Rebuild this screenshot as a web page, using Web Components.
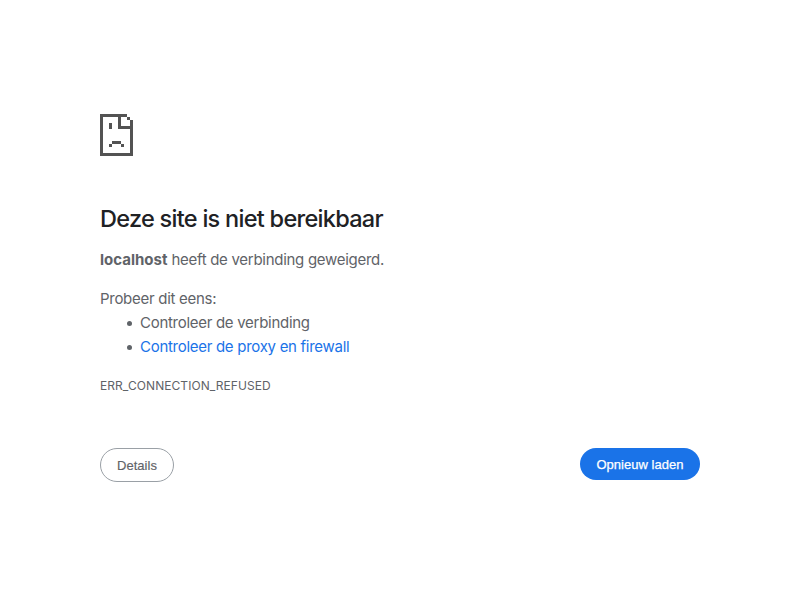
<!DOCTYPE html>
<html lang="nl"><head><meta charset="utf-8"><title>localhost</title>
<style>
html,body{margin:0;background:#fff}
body{font-family:Inter,"Liberation Sans",sans-serif;font-size:15px;line-height:24px;letter-spacing:-.285px;color:#5f6368}
</style></head><body>
<error-page>
  <sad-page-icon slot="icon"></sad-page-icon>
  <error-message slot="message" host="localhost" code="ERR_CONNECTION_REFUSED">
    <span slot="title">Deze site is niet bereikbaar</span>
    <span slot="summary">heeft de verbinding geweigerd.</span>
    <span slot="hint">Probeer dit eens:</span>
    <suggestion-item>Controleer de verbinding</suggestion-item>
    <suggestion-item link>Controleer de proxy en firewall</suggestion-item>
  </error-message>
  <pill-button slot="actions">Details</pill-button>
  <pill-button slot="actions" primary>Opnieuw laden</pill-button>
</error-page>
<script>
class Base extends HTMLElement{
  constructor(){super();this.attachShadow({mode:'open'}).innerHTML=this.constructor.markup;}
}
customElements.define('error-page',class extends Base{
  static markup=`<style>
    :host{display:block;box-sizing:border-box;width:600px;margin:0 auto;padding-top:114px}
    nav{display:flex;justify-content:space-between;align-items:flex-start;margin-top:50px}
  </style><slot name="icon"></slot><slot name="message"></slot><nav><slot name="actions"></slot></nav>`;
});
customElements.define('sad-page-icon',class extends Base{
  static markup=`<style>:host{display:block;width:33px;height:42px}svg{display:block}</style>
  <svg width="33" height="42" viewBox="0 0 11 14" fill="#535353" shape-rendering="crispEdges" aria-hidden="true">
    <path d="M0 0H9V1H7V4H11V5H6V1H1V13H10V5H11V14H0Z"/>
    <path d="M9 1h1v1H9zM10 2h1v3h-1zM3 3h1v2H3zM4 9h3v1H4zM3 10h1v1H3zM7 10h1v1H7z"/>
  </svg>`;
});
customElements.define('error-message',class extends Base{
  static markup=`<style>
    :host{display:block}
    h1{margin:48px 0 0;font-size:23.5px;font-weight:500;line-height:29px;letter-spacing:-.72px;color:#202124}
    p{margin:15px 0 0}
    strong{font-weight:700;letter-spacing:0}
    ul{margin:0;padding:0 0 0 40px;list-style:none}
    .code{margin-top:15px;font-size:12px;letter-spacing:.07px}
  </style>
  <h1><slot name="title"></slot></h1>
  <p><strong></strong> <slot name="summary"></slot></p>
  <p><slot name="hint"></slot></p>
  <ul><slot></slot></ul>
  <p class="code"></p>`;
  connectedCallback(){
    this.shadowRoot.querySelector('strong').textContent=this.getAttribute('host');
    this.shadowRoot.querySelector('.code').textContent=this.getAttribute('code');
  }
});
customElements.define('suggestion-item',class extends Base{
  static markup=`<style>
    :host{display:flex;align-items:center;margin-left:-13px}
    :host::before{content:"";width:5px;height:5px;margin:1px 8px 0 0;border-radius:50%;background:#5f6368}
    :host([link]) span{color:#1a73e8}
  </style><span><slot></slot></span>`;
});
customElements.define('pill-button',class extends Base{
  static markup=`<style>
    :host{display:block}
    button{box-sizing:border-box;display:block;width:74px;height:34px;margin:0;padding:1px 0 0;border:1px solid #9aa0a6;border-radius:17px;background:#fff;color:#5f6368;font:13px/31px "Liberation Sans",Arial,sans-serif;letter-spacing:.04px;-webkit-text-stroke:.15px currentColor}
    :host([primary]) button{width:120px;height:32px;border:0;border-radius:16px;background:#1a73e8;color:#fff;-webkit-text-stroke-width:.25px}
  </style><button type="button"><slot></slot></button>`;
});
</script>
</body></html>
